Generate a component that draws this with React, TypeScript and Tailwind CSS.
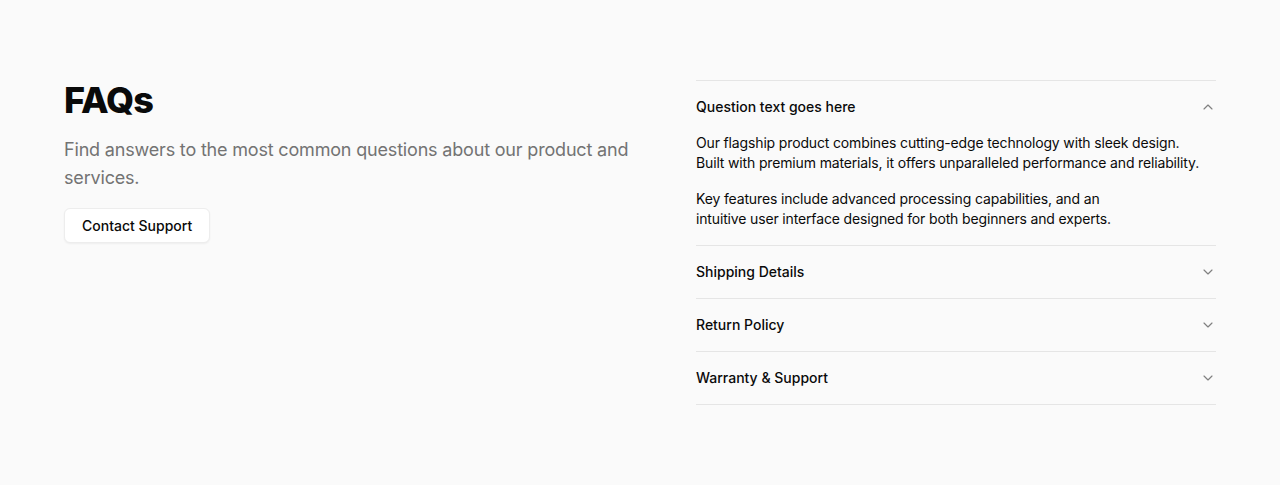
import React from 'react';
import { ChevronDown, ChevronUp } from 'lucide-react';

interface FaqItem {
  question: string;
  answer?: React.ReactNode;
}

const items: FaqItem[] = [
  {
    question: 'Question text goes here',
    answer: (
      <>
        <p>
          Our flagship product combines cutting-edge technology with sleek design.
          <br />
          Built with premium materials, it offers unparalleled performance and reliability.
        </p>
        <p>
          Key features include advanced processing capabilities, and an
          <br />
          intuitive user interface designed for both beginners and experts.
        </p>
      </>
    ),
  },
  { question: 'Shipping Details' },
  { question: 'Return Policy' },
  { question: 'Warranty & Support' },
];

const FaqRow: React.FC<{ item: FaqItem; open: boolean }> = ({ item, open }) => (
  <div className="border-b border-[#e5e5e5]">
    <button className="flex w-full items-center justify-between py-4 text-left text-sm font-medium text-[#0a0a0a]">
      {item.question}
      {open ? (
        <ChevronUp className="h-4 w-4 text-[#808080]" strokeWidth={1.75} />
      ) : (
        <ChevronDown className="h-4 w-4 text-[#808080]" strokeWidth={1.75} />
      )}
    </button>
    {open && item.answer && (
      <div className="flex flex-col gap-4 pb-4 text-sm tracking-[-0.15px] text-[#0a0a0a]">{item.answer}</div>
    )}
  </div>
);

export default function App() {
  return (
    <div className="min-h-[485px] bg-[#fafafa] font-['Inter',sans-serif]">
      <div className="grid grid-cols-[1fr_520px] gap-16 px-16 py-20">
        <div>
          <h2 className="text-4xl font-extrabold leading-10 tracking-tight text-[#0a0a0a]">FAQs</h2>
          <p className="mt-4 text-lg leading-7 tracking-[-0.18px] text-[#737373]">
            Find answers to the most common questions about our product and services.
          </p>
          <button className="mt-4 h-[35px] rounded-md border border-[#ededed] bg-white px-[17px] text-sm font-medium text-[#0a0a0a] shadow-xs">
            Contact Support
          </button>
        </div>
        <div className="border-t border-[#e5e5e5]">
          {items.map((item, i) => (
            <FaqRow key={item.question} item={item} open={i === 0} />
          ))}
        </div>
      </div>
    </div>
  );
}
